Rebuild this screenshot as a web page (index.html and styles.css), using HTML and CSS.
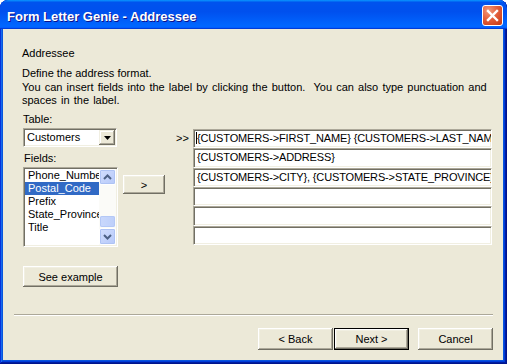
FILE: index.html
```html
<!DOCTYPE html>
<html lang="en">
<head>
    <meta charset="UTF-8">
    <title>Form Letter Genie - Addressee</title>
    <link rel="stylesheet" href="styles.css">
</head>
<body>
    <div class="window">
        <div class="titlebar">
            <span class="title">Form Letter Genie - Addressee</span>
            <div class="close">
                <svg width="19" height="19" viewBox="0 0 19 19">
                    <path d="M5 5 L14 14 M14 5 L5 14" stroke="#ffffff" stroke-width="2.4" stroke-linecap="square" fill="none"/>
                </svg>
            </div>
        </div>
        <div class="client">
            <div class="intro">
                <p class="heading">Addressee</p>
                <p class="define">Define the address format.</p>
                <p class="hint">You can insert fields into the label by clicking the button.&nbsp; You can also type punctuation and<br>spaces in the label.</p>
                <div class="lbl table-lbl">Table:</div>
            </div>

            <div class="builder">
                <div class="left-col">
                    <div class="combo">
                        <span class="combo-text">Customers</span>
                        <span class="combo-btn">
                            <svg width="7" height="4" viewBox="0 0 7 4"><path d="M0 0 H7 L3.5 4 Z" fill="#000000"/></svg>
                        </span>
                    </div>
                    <div class="lbl fields-lbl">Fields:</div>
                    <div class="listbox">
                        <ul class="items">
                            <li>Phone_Number</li>
                            <li class="selected">Postal_Code</li>
                            <li>Prefix</li>
                            <li>State_Province</li>
                            <li>Title</li>
                        </ul>
                        <div class="scrollbar">
                            <div class="sb-btn">
                                <svg width="9" height="6" viewBox="0 0 9 6"><path d="M1 5 L4.5 1.5 L8 5" stroke="#4d6185" stroke-width="2" fill="none"/></svg>
                            </div>
                            <div class="sb-track"><div class="sb-thumb"></div></div>
                            <div class="sb-btn down">
                                <svg width="9" height="6" viewBox="0 0 9 6"><path d="M1 1 L4.5 4.5 L8 1" stroke="#4d6185" stroke-width="2" fill="none"/></svg>
                            </div>
                        </div>
                    </div>
                    <button class="btn example-btn">See example</button>
                </div>

                <div class="mid-col">
                    <span class="pointer">&gt;&gt;</span>
                    <button class="btn insert-btn">&gt;</button>
                </div>

                <div class="lines">
                    <div class="line active"><span class="caret"></span>{CUSTOMERS-&gt;FIRST_NAME} {CUSTOMERS-&gt;LAST_NAME}</div>
                    <div class="line">{CUSTOMERS-&gt;ADDRESS}</div>
                    <div class="line">{CUSTOMERS-&gt;CITY}, {CUSTOMERS-&gt;STATE_PROVINCE} {CUSTOMERS-&gt;POSTAL_CODE}</div>
                    <div class="line"></div>
                    <div class="line"></div>
                    <div class="line"></div>
                </div>
            </div>

            <div class="separator"></div>

            <div class="actions">
                <button class="btn wizard-btn">&lt; Back</button>
                <button class="btn wizard-btn default">Next &gt;</button>
                <button class="btn wizard-btn cancel">Cancel</button>
            </div>
        </div>
    </div>
</body>
</html>
```

FILE: styles.css
```css
:root {
    --face-color: #ece9d8;
    --light-color: #f1efe2;
    --shadow-color: #aca899;
    --dark-color: #716f64;
    --select-color: #316ac5;
}

* {
    box-sizing: border-box;
}

body {
    margin: 0;
    background-color: #ffffff;
    font-family: 'Liberation Sans', Arial, sans-serif;
    font-size: 11px;
    color: #000000;
}

p {
    margin: 0;
}

.window {
    width: 507px;
    height: 364px;
    display: flex;
    flex-direction: column;
    background-color: #0855dd;
    border-radius: 8px 8px 0 0;
    overflow: hidden;
    box-shadow: inset -1px -1px #00138c, inset 1px 1px #0831d9, inset -2px -2px #001ea0, inset 2px 2px #166aee, inset -3px -3px #003bda, inset 3px 3px #0855dd;
}

/* title bar */
.titlebar {
    height: 29px;
    flex-shrink: 0;
    display: flex;
    align-items: center;
    justify-content: space-between;
    padding: 0 4px 0 7px;
    background: linear-gradient(180deg, #0997ff, #0053ee 8%, #0050ee 40%, #0066ff 88%, #0066ff 93%, #005bff 95%, #003dd7 96%, #003dd7);
    border-radius: 8px 8px 0 0;
}

.title {
    padding-top: 3px;
    color: #ffffff;
    font-size: 13px;
    font-weight: bold;
    text-shadow: 1px 1px #0f1089;
}

.close {
    width: 21px;
    height: 21px;
    margin-top: 2px;
    border: 1px solid #ffffff;
    border-radius: 3px;
    background: radial-gradient(circle at 30% 25%, #f09a7c 0%, #e3603d 45%, #cf4420 80%, #c03a16 100%);
}

.close svg {
    display: block;
}

/* dialog body */
.client {
    flex: 1;
    margin: 0 4px 4px 3px;
    background-color: var(--face-color);
}

.intro {
    padding-left: 19px;
    line-height: 13px;
}

.heading {
    padding-top: 18px;
}

.define {
    margin-top: 7px;
}

.hint {
    margin-top: 1px;
    white-space: nowrap;
    word-spacing: 1.1px;
}

.lbl {
    line-height: 13px;
    padding-left: 1px;
}

.table-lbl {
    margin-top: 6px;
}

.builder {
    display: flex;
    margin-top: 2px;
    padding-left: 20px;
}

.left-col {
    width: 95px;
    display: flex;
    flex-direction: column;
}

/* sunken fields */
.combo,
.listbox,
.line {
    background-color: #ffffff;
    border: 1px solid;
    border-color: var(--shadow-color) #ffffff #ffffff var(--shadow-color);
    box-shadow: inset 1px 1px var(--dark-color), inset -1px -1px var(--light-color);
    padding: 1px;
}

.combo {
    width: 94px;
    height: 19px;
    display: flex;
    align-items: stretch;
}

.combo-text {
    flex: 1;
    padding-left: 2px;
    line-height: 15px;
}

.combo-btn {
    width: 16px;
    display: flex;
    align-items: center;
    justify-content: center;
    background-color: var(--face-color);
    box-shadow: inset -1px -1px var(--dark-color), inset 1px 1px var(--light-color), inset -2px -2px var(--shadow-color), inset 2px 2px #ffffff;
}

.fields-lbl {
    margin-top: 5px;
}

.listbox {
    margin-top: 2px;
    height: 80px;
    display: flex;
}

.items {
    flex: 1;
    list-style: none;
    margin: 0;
    padding: 0;
    overflow: hidden;
}

.items li {
    height: 13px;
    line-height: 13px;
    padding-left: 3px;
    white-space: nowrap;
}

.items li.selected {
    background-color: var(--select-color);
    color: #ffffff;
}

.scrollbar {
    width: 17px;
    display: flex;
    flex-direction: column;
    background-color: #fbfbf8;
}

.sb-btn {
    height: 16px;
    display: flex;
    align-items: center;
    justify-content: center;
    background: linear-gradient(135deg, #d2defd, #b6c9fa);
    border: 1px solid #ffffff;
    border-radius: 2px;
    box-shadow: inset 0 0 0 1px #aec3f4;
}

.sb-btn.down {
    height: 17px;
}

.sb-track {
    flex: 1;
    display: flex;
    flex-direction: column;
    justify-content: flex-end;
}

.sb-thumb {
    height: 11px;
    margin: 0 1px 1px;
    background: linear-gradient(90deg, #c9d8fc, #bdcffa);
    border-radius: 2px;
    box-shadow: inset 0 0 0 1px #b4c8f6;
}

/* buttons */
.btn {
    font-family: inherit;
    font-size: 11px;
    color: #000000;
    background-color: var(--face-color);
    border: none;
    padding: 0;
    box-shadow: inset -1px -1px var(--dark-color), inset 1px 1px #ffffff, inset -2px -2px var(--shadow-color), inset 2px 2px var(--light-color);
}

.example-btn {
    width: 95px;
    height: 21px;
    margin-top: 19px;
}

.mid-col {
    width: 75px;
    display: flex;
    flex-direction: column;
    align-items: flex-start;
    padding-top: 1px;
}

.pointer {
    height: 19px;
    line-height: 19px;
    padding-left: 58px;
}

.insert-btn {
    width: 42px;
    height: 19px;
    margin: 27px 0 0 5px;
}

.lines {
    width: 299px;
    height: 116px;
    margin-top: 1px;
    display: grid;
    grid-template-rows: repeat(6, 1fr);
}

.line {
    padding: 1px 1px 1px 3px;
    line-height: 15px;
    white-space: nowrap;
    overflow: hidden;
    letter-spacing: -0.15px;
}

.line.active {
    padding-left: 2px;
}

.caret {
    display: inline-block;
    width: 1px;
    height: 12px;
    background-color: #000000;
    vertical-align: -2px;
}

.separator {
    margin: 27px 10px 0 11px;
    border-top: 1px solid var(--shadow-color);
    border-bottom: 1px solid #ffffff;
}

.actions {
    display: flex;
    justify-content: flex-end;
    margin-top: 12px;
    padding-right: 10px;
}

.wizard-btn {
    width: 75px;
    height: 22px;
}

.wizard-btn.default {
    margin-left: 1px;
    border: 1px solid #000000;
}

.wizard-btn.cancel {
    margin-left: 9px;
}
```
